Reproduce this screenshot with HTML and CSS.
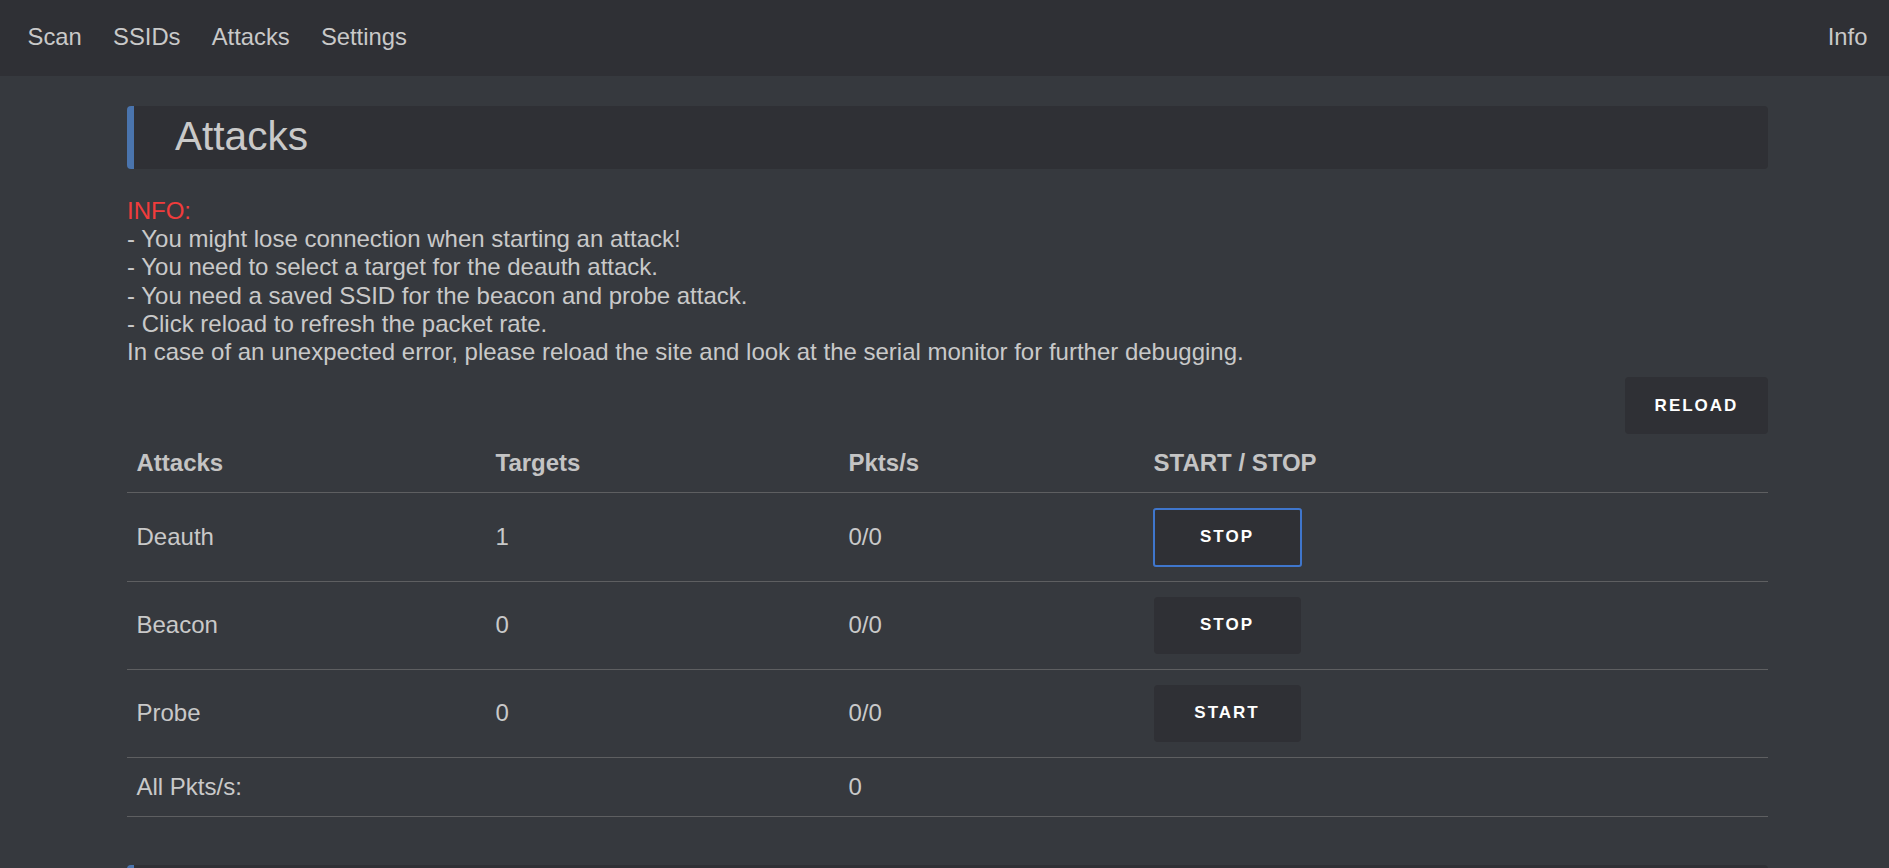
FILE: index.html
```html
<!DOCTYPE html>
<html lang="en">
<head>
<meta charset="utf-8">
<title>Attacks</title>
<link rel="stylesheet" href="styles.css">
</head>
<body>
<nav class="navbar">
  <div class="nav-left">
    <a class="nav-link" href="#">Scan</a>
    <a class="nav-link" href="#">SSIDs</a>
    <a class="nav-link" href="#">Attacks</a>
    <a class="nav-link" href="#">Settings</a>
  </div>
  <div class="nav-right">
    <a class="nav-link nav-info" href="#">Info</a>
  </div>
</nav>
<main class="container">
  <div class="title-box"><h1 class="title">Attacks</h1></div>
  <p class="info">
    <span class="info-label">INFO:</span><br>
    - You might lose connection when starting an attack!<br>
    - You need to select a target for the deauth attack.<br>
    - You need a saved SSID for the beacon and probe attack.<br>
    - Click reload to refresh the packet rate.<br>
    In case of an unexpected error, please reload the site and look at the serial monitor for further debugging.
  </p>
  <div class="actions">
    <button class="btn btn-reload">RELOAD</button>
  </div>
  <table class="attacks">
    <thead>
      <tr>
        <th class="col-name">Attacks</th>
        <th class="col-targets">Targets</th>
        <th class="col-pkts">Pkts/s</th>
        <th class="col-action">START / STOP</th>
      </tr>
    </thead>
    <tbody>
      <tr>
        <td>Deauth</td><td>1</td><td>0/0</td>
        <td><button class="btn btn-row is-focused">STOP</button></td>
      </tr>
      <tr>
        <td>Beacon</td><td>0</td><td>0/0</td>
        <td><button class="btn btn-row">STOP</button></td>
      </tr>
      <tr>
        <td>Probe</td><td>0</td><td>0/0</td>
        <td><button class="btn btn-row">START</button></td>
      </tr>
      <tr class="total">
        <td>All Pkts/s:</td><td></td><td>0</td><td></td>
      </tr>
    </tbody>
  </table>
  <div class="title-box next"></div>
</main>
</body>
</html>
```
FILE: styles.css
```css
html, body {
  margin: 0;
  padding: 0;
}
body {
  background: #36393e;
  color: #c9c9c9;
  font-family: "Liberation Sans", Arial, sans-serif;
  font-size: 24px;
  line-height: 1.2;
  overflow: hidden;
}
.navbar {
  height: 76px;
  background: #2f3035;
  display: flex;
  align-items: center;
  justify-content: space-between;
  padding: 0 6px 0 12px;
}
.nav-left, .nav-right {
  display: flex;
  align-items: center;
}
.nav-link {
  color: #c9c9c9;
  text-decoration: none;
  padding: 0 15.6px;
  font-size: 23.8px;
  line-height: 28px;
  position: relative;
  top: -1px;
}
.container {
  padding: 30px 121px 0 127px;
}
.title-box {
  background: #2f3035;
  border-left: 7px solid #4a74ad;
  border-radius: 4px;
  height: 63px;
  display: flex;
  align-items: center;
  padding-left: 41px;
  box-sizing: border-box;
}
.title {
  margin: 0;
  font-weight: normal;
  font-size: 40.6px;
  line-height: 1;
  color: #c9c9c9;
  position: relative;
  top: -1px;
}
.info {
  margin: 28px 0 0 0;
  line-height: 28.2px;
}
.info-label {
  color: #f03c3c;
}
.actions {
  display: flex;
  justify-content: flex-end;
  margin-top: 11px;
}
.btn {
  background: #2f3035;
  color: #ffffff;
  border: none;
  border-radius: 4px;
  font-family: "Liberation Sans", Arial, sans-serif;
  font-weight: bold;
  font-size: 17px;
  letter-spacing: 2px;
  height: 57px;
  padding: 0;
  cursor: pointer;
}
.btn-reload {
  width: 143px;
}
.btn-row {
  width: 147px;
  display: block;
}
.btn-row.is-focused {
  outline: 2px solid #3f76cc;
  outline-offset: -1px;
  border-radius: 2px;
}
.attacks {
  width: 100%;
  border-collapse: collapse;
  table-layout: fixed;
}
.attacks th, .attacks td {
  text-align: left;
  padding: 15.1px 9.5px;
  line-height: 28px;
  vertical-align: middle;
  border-bottom: 1px solid #5e5f61;
}
.attacks th {
  font-weight: bold;
  color: #c4c4c4;
}
.attacks td .btn-row {
  margin: 0;
}
.col-name { width: 340px; }
.col-targets { width: 334px; }
.col-pkts { width: 286px; }
.title-box.next {
  margin-top: 48px;
}
```
